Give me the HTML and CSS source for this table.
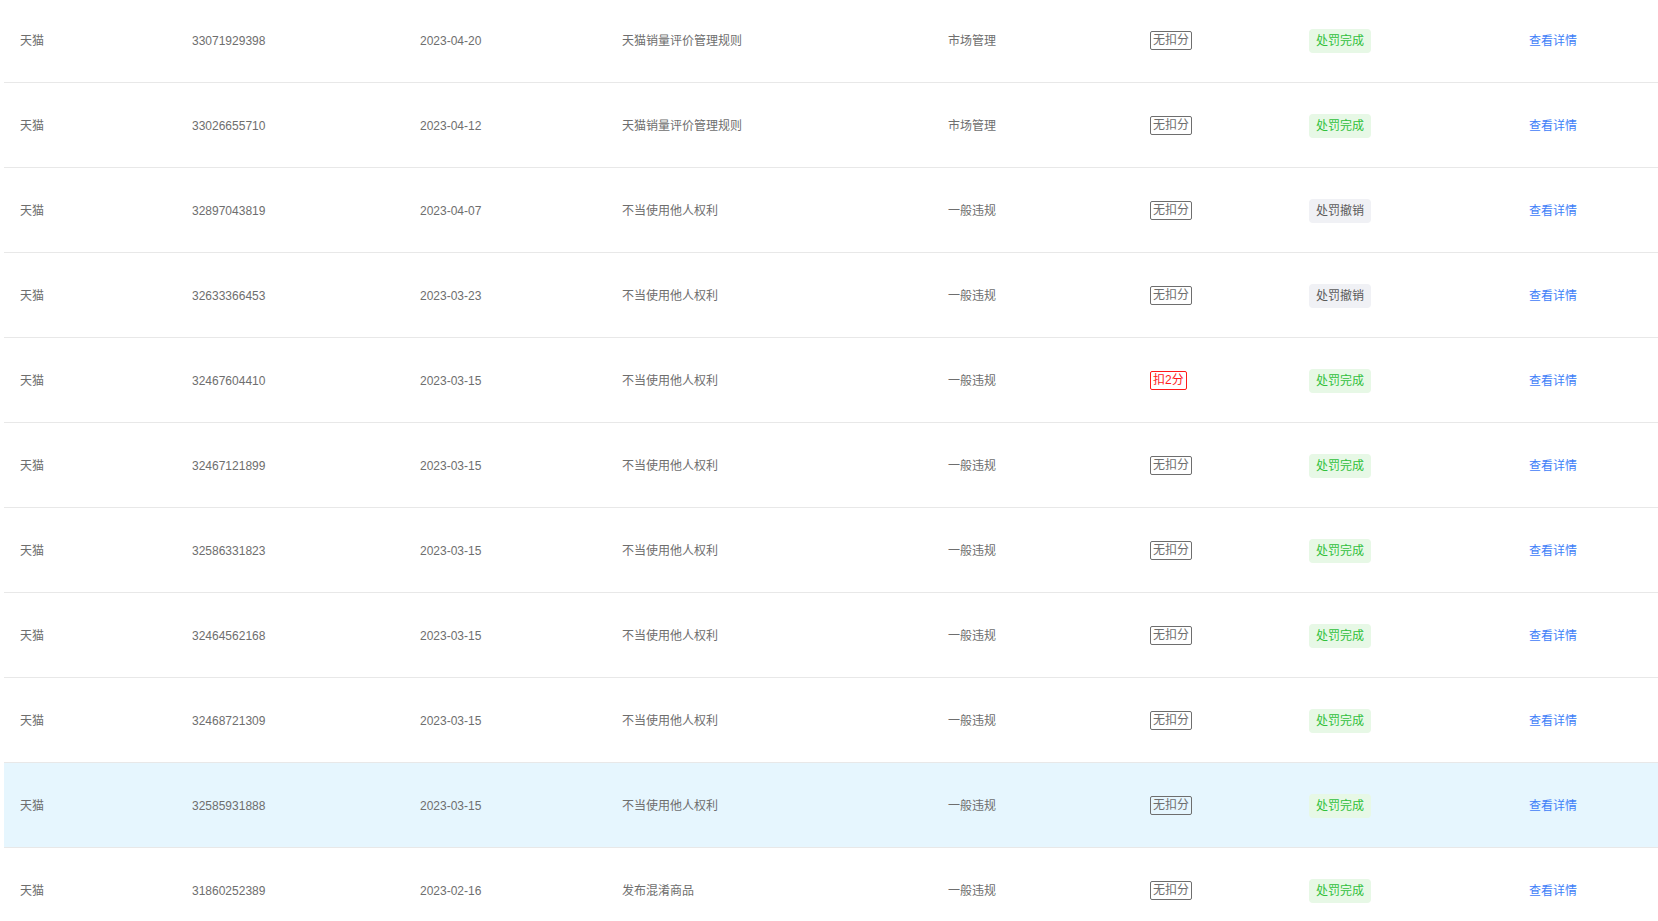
FILE: index.html
```html
<!DOCTYPE html>
<html lang="zh-CN">
<head>
<meta charset="utf-8">
<title>违规记录</title>
<link rel="stylesheet" href="styles.css">
</head>
<body>
<div class="table">
  <div class="row"><div class="cell">天猫</div><div class="cell">33071929398</div><div class="cell">2023-04-20</div><div class="cell">天猫销量评价管理规则</div><div class="cell">市场管理</div><div class="cell"><span class="tag">无扣分</span></div><div class="cell"><span class="badge done">处罚完成</span></div><div class="cell"><a class="link">查看详情</a></div></div>
  <div class="row"><div class="cell">天猫</div><div class="cell">33026655710</div><div class="cell">2023-04-12</div><div class="cell">天猫销量评价管理规则</div><div class="cell">市场管理</div><div class="cell"><span class="tag">无扣分</span></div><div class="cell"><span class="badge done">处罚完成</span></div><div class="cell"><a class="link">查看详情</a></div></div>
  <div class="row"><div class="cell">天猫</div><div class="cell">32897043819</div><div class="cell">2023-04-07</div><div class="cell">不当使用他人权利</div><div class="cell">一般违规</div><div class="cell"><span class="tag">无扣分</span></div><div class="cell"><span class="badge revoked">处罚撤销</span></div><div class="cell"><a class="link">查看详情</a></div></div>
  <div class="row"><div class="cell">天猫</div><div class="cell">32633366453</div><div class="cell">2023-03-23</div><div class="cell">不当使用他人权利</div><div class="cell">一般违规</div><div class="cell"><span class="tag">无扣分</span></div><div class="cell"><span class="badge revoked">处罚撤销</span></div><div class="cell"><a class="link">查看详情</a></div></div>
  <div class="row"><div class="cell">天猫</div><div class="cell">32467604410</div><div class="cell">2023-03-15</div><div class="cell">不当使用他人权利</div><div class="cell">一般违规</div><div class="cell"><span class="tag red">扣2分</span></div><div class="cell"><span class="badge done">处罚完成</span></div><div class="cell"><a class="link">查看详情</a></div></div>
  <div class="row"><div class="cell">天猫</div><div class="cell">32467121899</div><div class="cell">2023-03-15</div><div class="cell">不当使用他人权利</div><div class="cell">一般违规</div><div class="cell"><span class="tag">无扣分</span></div><div class="cell"><span class="badge done">处罚完成</span></div><div class="cell"><a class="link">查看详情</a></div></div>
  <div class="row"><div class="cell">天猫</div><div class="cell">32586331823</div><div class="cell">2023-03-15</div><div class="cell">不当使用他人权利</div><div class="cell">一般违规</div><div class="cell"><span class="tag">无扣分</span></div><div class="cell"><span class="badge done">处罚完成</span></div><div class="cell"><a class="link">查看详情</a></div></div>
  <div class="row"><div class="cell">天猫</div><div class="cell">32464562168</div><div class="cell">2023-03-15</div><div class="cell">不当使用他人权利</div><div class="cell">一般违规</div><div class="cell"><span class="tag">无扣分</span></div><div class="cell"><span class="badge done">处罚完成</span></div><div class="cell"><a class="link">查看详情</a></div></div>
  <div class="row"><div class="cell">天猫</div><div class="cell">32468721309</div><div class="cell">2023-03-15</div><div class="cell">不当使用他人权利</div><div class="cell">一般违规</div><div class="cell"><span class="tag">无扣分</span></div><div class="cell"><span class="badge done">处罚完成</span></div><div class="cell"><a class="link">查看详情</a></div></div>
  <div class="row hover"><div class="cell">天猫</div><div class="cell">32585931888</div><div class="cell">2023-03-15</div><div class="cell">不当使用他人权利</div><div class="cell">一般违规</div><div class="cell"><span class="tag">无扣分</span></div><div class="cell"><span class="badge done">处罚完成</span></div><div class="cell"><a class="link">查看详情</a></div></div>
  <div class="row"><div class="cell">天猫</div><div class="cell">31860252389</div><div class="cell">2023-02-16</div><div class="cell">发布混淆商品</div><div class="cell">一般违规</div><div class="cell"><span class="tag">无扣分</span></div><div class="cell"><span class="badge done">处罚完成</span></div><div class="cell"><a class="link">查看详情</a></div></div>
</div>
</body>
</html>
```
FILE: styles.css
```css
html, body {
  margin: 0;
  padding: 0;
  background: #ffffff;
  overflow: hidden;
}
body {
  font-family: "Liberation Sans", "Noto Sans CJK SC", sans-serif;
  font-size: 12px;
  color: #6e6e6e;
}
.table {
  margin: -2px 0 0 4px;
}
.row {
  display: grid;
  grid-template-columns: 172px 228px 202px 326px 202px 159px 220px 1fr;
  align-items: center;
  height: 84px;
  border-bottom: 1px solid #e8e8e8;
}
.row.hover {
  background: #e6f6fe;
}
.cell {
  padding: 1px 0 0 16px;
  line-height: 18px;
  white-space: nowrap;
}
.tag {
  display: inline-block;
  border: 1px solid #6e6e6e;
  border-radius: 2px;
  padding: 0 2px;
  line-height: 17px;
  color: #6e6e6e;
}
.tag.red {
  border-color: #ff1a1a;
  color: #ff1a1a;
}
.badge {
  display: inline-block;
  padding: 0 7px;
  line-height: 24px;
  border-radius: 4px;
}
.badge.done {
  background: #e7f8e6;
  color: #30c03c;
}
.badge.revoked {
  background: #f0f1f5;
  color: #5a5a5a;
}
.link {
  color: #4080f8;
  cursor: pointer;
}
```
